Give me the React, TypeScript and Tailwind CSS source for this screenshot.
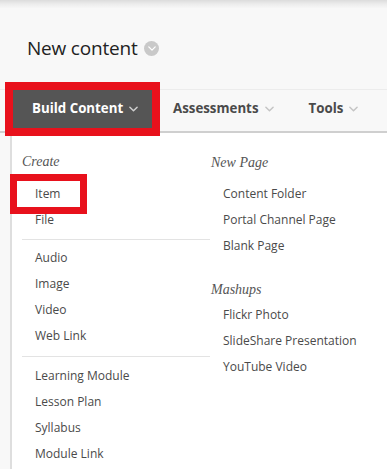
import React from "react";

const font = { fontFamily: '"Open Sans", "Liberation Sans", sans-serif' };

function Chevron({ className }: { className?: string }) {
  return (
    <svg className={className} viewBox="0 0 10 6" fill="none" stroke="currentColor" strokeWidth="1.6" strokeLinecap="round" strokeLinejoin="round">
      <path d="M1 1l4 4 4-4" />
    </svg>
  );
}

function Row({ children, boxed }: { children: React.ReactNode; boxed?: boolean }) {
  return (
    <div className="h-[26px] flex items-center pl-[13px] relative">
      {boxed && (
        <span className="absolute left-[-12px] top-[-7px] w-[77px] h-[40px] border-[7px] border-[#e8111c]" />
      )}
      <span className="relative">{children}</span>
    </div>
  );
}

function Heading({ children }: { children: React.ReactNode }) {
  return (
    <div className="h-[20px] flex items-center text-[14px] italic text-[#555]" style={{ fontFamily: '"Liberation Serif", "DejaVu Serif", serif' }}>
      {children}
    </div>
  );
}

export default function App() {
  return (
    <div className="w-[387px] h-[469px] overflow-hidden bg-[#f8f8f8]" style={font}>
      {/* top shadow band */}
      <div className="h-[8px] bg-gradient-to-b from-[#dcdcdc] via-[#ececec] to-[#f6f6f6]" />

      {/* title */}
      <div className="pl-[27px] mt-[26px] h-[28px] flex items-center gap-[7px]">
        <span className="text-[19px] text-[#222] tracking-[-0.2px]">New content</span>
        <span className="w-[15px] h-[15px] rounded-full bg-[#c9c9c9] flex items-center justify-center">
          <Chevron className="w-[8px] h-[5px] text-white" />
        </span>
      </div>

      {/* nav */}
      <div className="mt-[27px] h-[44px] border-t border-[#ececec] border-b-2 border-b-[#cfcfcf] flex items-start text-[13.3px] font-bold">
        <div className="ml-[13px] h-[38px] w-[139px] bg-[#555555] outline-[8px] outline-solid outline-[#e8111c] flex items-center pl-[19px] gap-[6px] relative z-10">
          <span className="text-white">Build Content</span>
          <Chevron className="w-[9px] h-[6px] text-[#cfcfcf]" />
        </div>
        <div className="h-[38px] flex items-center ml-[21px] gap-[6px]">
          <span className="text-[#4a4a4a]">Assessments</span>
          <Chevron className="w-[9px] h-[6px] text-[#c4c4c4]" />
        </div>
        <div className="h-[38px] flex items-center ml-[35px] gap-[6px]">
          <span className="text-[#4a4a4a]">Tools</span>
          <Chevron className="w-[9px] h-[6px] text-[#c4c4c4]" />
        </div>
      </div>

      {/* dropdown panel */}
      <div className="ml-[10px] h-[400px] bg-white border-l-2 border-[#dedede] grid grid-cols-[198px_1fr] text-[12px] text-[#4a4a4a]">
        <div className="pl-[10px] pt-[18px]">
          <Heading>Create</Heading>
          <div className="mt-[10px]">
            <Row boxed>Item</Row>
            <Row>File</Row>
          </div>
          <div className="h-[12px] flex items-center">
            <div className="h-px w-full bg-[#e3e3e3]" />
          </div>
          <Row>Audio</Row>
          <Row>Image</Row>
          <Row>Video</Row>
          <Row>Web Link</Row>
          <div className="h-[14px] flex items-center">
            <div className="h-px w-full bg-[#e3e3e3]" />
          </div>
          <Row>Learning Module</Row>
          <Row>Lesson Plan</Row>
          <Row>Syllabus</Row>
          <Row>Module Link</Row>
        </div>
        <div className="pt-[19px] pl-[1px]">
          <Heading>New Page</Heading>
          <div className="mt-[9px] ml-[-1px]">
            <Row>Content Folder</Row>
            <Row>Portal Channel Page</Row>
            <Row>Blank Page</Row>
          </div>
          <div className="mt-[20px]">
            <Heading>Mashups</Heading>
          </div>
          <div className="mt-[3px] ml-[-1px]">
            <Row>Flickr Photo</Row>
            <Row>SlideShare Presentation</Row>
            <Row>YouTube Video</Row>
          </div>
        </div>
      </div>
    </div>
  );
}
